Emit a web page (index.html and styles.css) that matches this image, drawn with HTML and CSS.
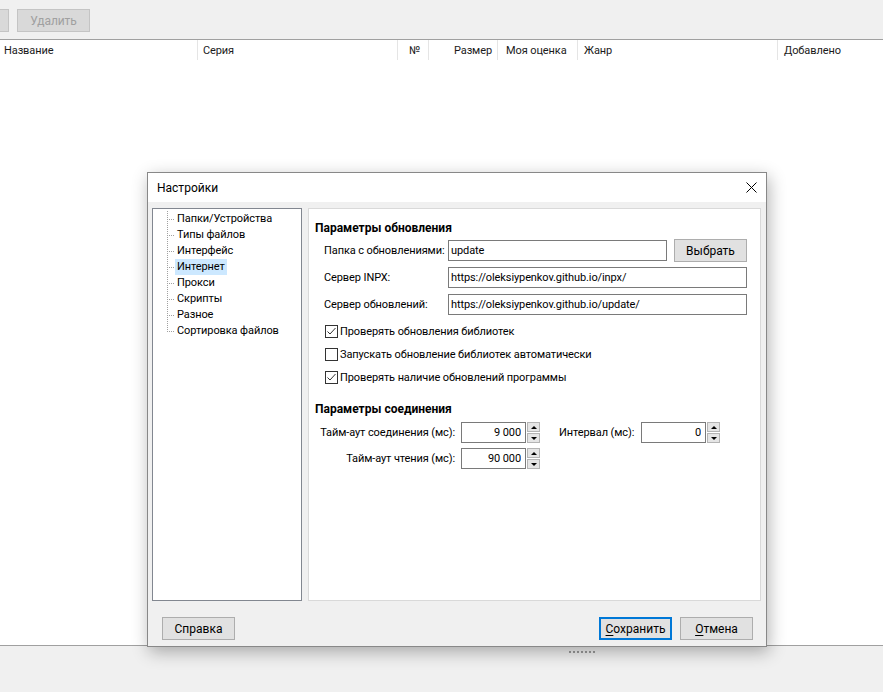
FILE: index.html
```html
<!DOCTYPE html>
<html lang="ru">
<head>
    <meta charset="UTF-8">
    <title>Настройки</title>
    <link rel="stylesheet" href="styles.css">
</head>
<body>
    <div class="app">
        <div class="toolbar">
            <button class="tb-btn tb-cut" disabled></button>
            <button class="tb-btn" disabled>Удалить</button>
        </div>

        <div class="list-head">
            <div class="col col-name">Название</div>
            <div class="col col-series">Серия</div>
            <div class="col col-num">№</div>
            <div class="col col-size">Размер</div>
            <div class="col col-rating">Моя оценка</div>
            <div class="col col-genre">Жанр</div>
            <div class="col col-added">Добавлено</div>
        </div>
        <div class="list-body"></div>

        <div class="statusbar">
            <span class="grip"></span>
        </div>
    </div>

    <div class="dialog">
        <div class="dlg-title">
            <span>Настройки</span>
            <svg class="close" width="11" height="11" viewBox="0 0 11 11">
                <path d="M0.5 0.5 L10.5 10.5 M10.5 0.5 L0.5 10.5" stroke="#000" stroke-width="1" fill="none"/>
            </svg>
        </div>

        <div class="dlg-body">
            <div class="panels">
                <ul class="tree">
                    <li class="tree-item"><span class="branch"></span><span class="tree-label">Папки/Устройства</span></li>
                    <li class="tree-item"><span class="branch"></span><span class="tree-label">Типы файлов</span></li>
                    <li class="tree-item"><span class="branch"></span><span class="tree-label">Интерфейс</span></li>
                    <li class="tree-item"><span class="branch"></span><span class="tree-label selected">Интернет</span></li>
                    <li class="tree-item"><span class="branch"></span><span class="tree-label">Прокси</span></li>
                    <li class="tree-item"><span class="branch"></span><span class="tree-label">Скрипты</span></li>
                    <li class="tree-item"><span class="branch"></span><span class="tree-label">Разное</span></li>
                    <li class="tree-item last"><span class="branch"></span><span class="tree-label">Сортировка файлов</span></li>
                </ul>

                <div class="page">
                    <div class="section-title">Параметры обновления</div>

                    <div class="form-grid">
                        <label>Папка с обновлениями:</label>
                        <div class="with-btn">
                            <input class="field" type="text" value="update">
                            <button class="btn">Выбрать</button>
                        </div>

                        <label>Сервер INPX:</label>
                        <input class="field" type="text" value="https://oleksiypenkov.github.io/inpx/">

                        <label>Сервер обновлений:</label>
                        <input class="field" type="text" value="https://oleksiypenkov.github.io/update/">
                    </div>

                    <div class="checks">
                        <div class="check">
                            <span class="box"><svg width="11" height="11" viewBox="0 0 11 11"><path d="M1.5 5.5 L4 8 L9.5 2" stroke="#333" stroke-width="1" fill="none"/></svg></span>
                            <span>Проверять обновления библиотек</span>
                        </div>
                        <div class="check">
                            <span class="box"></span>
                            <span>Запускать обновление библиотек автоматически</span>
                        </div>
                        <div class="check">
                            <span class="box"><svg width="11" height="11" viewBox="0 0 11 11"><path d="M1.5 5.5 L4 8 L9.5 2" stroke="#333" stroke-width="1" fill="none"/></svg></span>
                            <span>Проверять наличие обновлений программы</span>
                        </div>
                    </div>

                    <div class="section-title second">Параметры соединения</div>

                    <div class="spin-rows">
                        <div class="spin-row">
                            <label class="spin-label">Тайм-аут соединения (мс):</label>
                            <div class="spin">
                                <input class="spin-input" type="text" value="9 000">
                                <div class="spin-btns"><span class="up"></span><span class="down"></span></div>
                            </div>
                            <label class="spin-label2">Интервал (мс):</label>
                            <div class="spin">
                                <input class="spin-input" type="text" value="0">
                                <div class="spin-btns"><span class="up"></span><span class="down"></span></div>
                            </div>
                        </div>
                        <div class="spin-row">
                            <label class="spin-label">Тайм-аут чтения (мс):</label>
                            <div class="spin">
                                <input class="spin-input" type="text" value="90 000">
                                <div class="spin-btns"><span class="up"></span><span class="down"></span></div>
                            </div>
                        </div>
                    </div>
                </div>
            </div>

            <div class="dlg-footer">
                <button class="btn">Справка</button>
                <span class="spacer"></span>
                <button class="btn default"><u>С</u>охранить</button>
                <button class="btn"><u>О</u>тмена</button>
            </div>
        </div>
    </div>
</body>
</html>
```

FILE: styles.css
```css
* {
    box-sizing: border-box;
}

body {
    margin: 0;
    font-family: Roboto, "Noto Sans", sans-serif;
    font-size: 11px;
    letter-spacing: -0.1px;
    color: #000;
    background-color: #fff;
}

label,
button,
input {
    white-space: nowrap;
    letter-spacing: inherit;
}

.app {
    height: 692px;
    display: flex;
    flex-direction: column;
}

/* main window */
.toolbar {
    height: 40px;
    background-color: #f0f0f0;
    border-bottom: 1px solid #a0a0a0;
    display: flex;
    align-items: flex-start;
    padding-top: 9px;
    flex: none;
}

.tb-btn {
    width: 73px;
    height: 23px;
    margin-right: 8px;
    padding: 0;
    background-color: #d9d9d9;
    border: 1px solid #c4c4c4;
    color: #a0a0a0;
    font: inherit;
    font-size: 12px;
}

.tb-cut {
    width: 9px;
    border-left: none;
}

.list-head {
    display: flex;
    height: 20px;
    flex: none;
}

.col {
    display: flex;
    align-items: center;
    height: 100%;
    padding-top: 1px;
    border-right: 1px solid #e5e5e5;
    white-space: nowrap;
    color: #1a1a1a;
}

.col-name { width: 198px; padding-left: 4px; }
.col-series { width: 200px; padding-left: 5px; }
.col-num { width: 31px; padding-left: 11px; }
.col-size { width: 69px; justify-content: flex-end; padding-right: 5px; }
.col-rating { width: 80px; padding-left: 8px; }
.col-genre { width: 200px; padding-left: 6px; }
.col-added { flex: 1; padding-left: 6px; border-right: none; }

.list-body {
    flex: 1;
    background-color: #fff;
}

.statusbar {
    height: 47px;
    flex: none;
    background-color: #f0f0f0;
    border-top: 1px solid #a0a0a0;
    padding: 5px 0 0 569px;
}

.grip {
    display: block;
    width: 27px;
    height: 2px;
    background-image: repeating-linear-gradient(to right, #9a9a9a 0 2px, transparent 2px 4px);
}

/* dialog */
.dialog {
    position: absolute;
    left: 147px;
    top: 172px;
    width: 620px;
    height: 475px;
    border: 1px solid #888;
    background-color: #f0f0f0;
    box-shadow: 2px 5px 16px rgba(0,0,0,0.3);
    display: flex;
    flex-direction: column;
}

.dlg-title {
    height: 29px;
    flex: none;
    background-color: #fff;
    display: flex;
    align-items: center;
    justify-content: space-between;
    padding: 0 9px 0 9px;
    font-size: 12px;
    letter-spacing: 0;
}

.close {
    display: block;
}

.dlg-body {
    flex: 1;
    padding: 6px 5px 6px 4px;
    display: flex;
    flex-direction: column;
}

.panels {
    display: flex;
    gap: 6px;
    height: 393px;
}

.tree {
    width: 150px;
    margin: 0;
    padding: 2px 0 0 14px;
    list-style: none;
    background-color: #fff;
    border: 1px solid #828790;
}

.tree-item {
    display: flex;
    align-items: center;
    height: 16px;
}

.branch {
    width: 8px;
    height: 16px;
    flex: none;
    background-image:
        repeating-linear-gradient(to bottom, #a0a0a0 0 1px, transparent 1px 2px),
        repeating-linear-gradient(to right, #a0a0a0 0 1px, transparent 1px 2px);
    background-size: 1px 100%, 100% 1px;
    background-position: 0 0, 0 8px;
    background-repeat: no-repeat;
}

.tree-item.last .branch {
    background-size: 1px 9px, 100% 1px;
}

.tree-label {
    padding: 0 2px;
    line-height: 16px;
    white-space: nowrap;
}

.tree-label.selected {
    background-color: #cce8ff;
}

.page {
    flex: 1;
    background-color: #fff;
    border: 1px solid #d9d9d9;
    padding: 11px 13px 0 6px;
}

.section-title {
    font-weight: bold;
    font-size: 12px;
    line-height: 16px;
    letter-spacing: 0;
}

.section-title.second {
    margin-top: 16px;
}

.form-grid {
    margin-top: 3px;
    padding-left: 9px;
    display: grid;
    grid-template-columns: 124px 1fr;
    grid-auto-rows: 23px;
    row-gap: 4px;
    align-items: center;
}

.with-btn {
    display: flex;
    align-items: center;
    gap: 7px;
}

.with-btn .field {
    flex: 1;
}

.field {
    width: 100%;
    height: 21px;
    padding: 0 2px;
    border: 1px solid #7a7a7a;
    font: inherit;
    color: #000;
}

.btn {
    width: 73px;
    height: 23px;
    padding: 0;
    background-color: #e1e1e1;
    border: 1px solid #adadad;
    font: inherit;
    font-size: 12px;
    letter-spacing: 0;
    color: #000;
    flex: none;
}

.btn u {
    text-underline-offset: 2px;
}

.btn.default {
    border: 2px solid #0078d7;
}

.checks {
    margin-top: 7px;
    padding-left: 10px;
    display: flex;
    flex-direction: column;
    gap: 7px;
}

.check {
    display: flex;
    align-items: center;
    gap: 2px;
    height: 16px;
}

.box {
    width: 13px;
    height: 13px;
    border: 1px solid #333;
    background-color: #fff;
    display: flex;
    align-items: center;
    justify-content: center;
}

.spin-rows {
    margin-top: 5px;
    display: flex;
    flex-direction: column;
    gap: 5px;
}

.spin-row {
    display: flex;
    align-items: center;
    height: 21px;
}

.spin-label {
    width: 140px;
    margin-right: 6px;
    text-align: right;
}

.spin-label2 {
    width: 82px;
    margin-left: 19px;
}

.spin {
    display: flex;
}

.spin-input {
    width: 65px;
    height: 21px;
    border: 1px solid #7a7a7a;
    padding: 0 4px 0 2px;
    text-align: right;
    font: inherit;
    color: #000;
}

.spin-btns {
    width: 13px;
    height: 21px;
    margin-left: 1px;
    display: flex;
    flex-direction: column;
    gap: 1px;
}

.spin-btns span {
    flex: 1;
    background-color: #e5e5e5;
    border: 1px solid #b4b4b4;
    display: flex;
    align-items: center;
    justify-content: center;
}

.spin-btns .up::after {
    content: "";
    border-left: 3px solid transparent;
    border-right: 3px solid transparent;
    border-bottom: 3px solid #000;
}

.spin-btns .down::after {
    content: "";
    border-left: 3px solid transparent;
    border-right: 3px solid transparent;
    border-top: 3px solid #000;
}

.dlg-footer {
    margin-top: 16px;
    display: flex;
    gap: 8px;
    padding: 0 8px 0 10px;
}

.spacer {
    flex: 1;
}
```
